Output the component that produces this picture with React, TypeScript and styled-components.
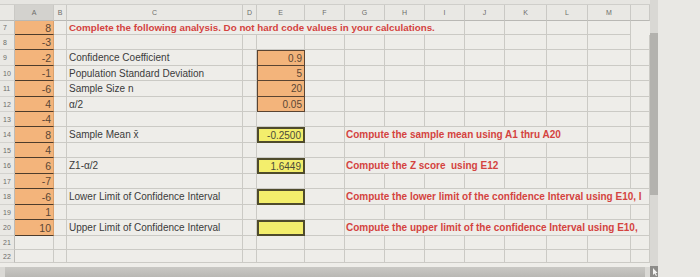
import React from 'react'
import styled, { createGlobalStyle } from 'styled-components'

const GlobalStyle = createGlobalStyle`
  html, body {
    margin: 0;
    padding: 0;
    background: #ebeae6;
    overflow: hidden;
  }
`

const COLS = '15px 39px 13px 176px 14px 48px 40px 40px 40px 40px 40px 42px 41px 43px 19px'
const LETTERS = ['A', 'B', 'C', 'D', 'E', 'F', 'G', 'H', 'I', 'J', 'K', 'L', 'M', '']

const Page = styled.div`
  display: flex;
  width: 700px;
  height: 277px;
  overflow: hidden;
`

const Sheet = styled.div`
  display: flex;
  flex-direction: column;
  width: 650px;
  height: 277px;
  background: #eeede9;
`

const TopStrip = styled.div`
  height: 4px;
  background: #e6e5e1;
  border-bottom: 1px solid #cfceca;
`

const Row = styled.div<{ $h: number }>`
  display: grid;
  grid-template-columns: ${COLS};
  height: ${(p) => p.$h}px;
  flex-shrink: 0;
`

const HeadCell = styled.div<{ $active?: boolean }>`
  display: flex;
  align-items: center;
  justify-content: center;
  background: ${(p) => (p.$active ? '#d3d2ce' : '#e9e8e4')};
  border-right: 1px solid #cac9c5;
  border-bottom: 1px solid #b9b8b4;
  font-family: 'Liberation Sans', Arial, sans-serif;
  font-size: 7px;
  color: #6d6d6a;
`

const RowNum = styled.div`
  display: flex;
  align-items: center;
  padding-left: 3px;
  background: #e9e8e4;
  border-right: 1px solid #bdbcb8;
  border-bottom: 1px solid #d3d2ce;
  font-family: 'Liberation Sans', Arial, sans-serif;
  font-size: 7px;
  color: #6d6d6a;
`

const Cell = styled.div<{ $span?: number }>`
  grid-column: span ${(p) => p.$span ?? 1};
  display: flex;
  align-items: center;
  box-sizing: border-box;
  min-width: 0;
  border-right: 1px solid #cbcac5;
  border-bottom: 1px solid #cbcac5;
  white-space: nowrap;
  overflow: visible;
`

const OrangeA = styled(Cell)`
  justify-content: flex-end;
  padding-right: 2px;
  background: #f3b47b;
  border-right: 1px solid #d9a06c;
  border-bottom: 1.5px solid #4d3c2c;
  font-family: 'Liberation Sans', Arial, sans-serif;
  font-size: 10.5px;
  color: #5a4634;
`

const OrangeE = styled(Cell)<{ $first?: boolean }>`
  justify-content: flex-end;
  padding-right: 2px;
  background: #f3b47b;
  border: 1.5px solid #5a4432;
  border-top: ${(p) => (p.$first ? '1.5px solid #5a4432' : 'none')};
  font-family: 'Liberation Sans', Arial, sans-serif;
  font-size: 10px;
  color: #5a4634;
`

const YellowE = styled(Cell)`
  justify-content: flex-end;
  padding-right: 2px;
  background: #f3ee6c;
  border: 2px solid #4f4b2c;
  font-family: 'Liberation Sans', Arial, sans-serif;
  font-size: 10px;
  color: #4a4a3a;
`

const Label = styled(Cell)`
  padding-left: 2px;
  font-family: 'Liberation Sans', Arial, sans-serif;
  font-size: 10px;
  color: #3b3b3b;
`

const Note = styled(Cell)<{ $indent?: number; $size?: number }>`
  padding-left: ${(p) => p.$indent ?? 1}px;
  font-family: 'Liberation Sans', Arial, sans-serif;
  font-weight: bold;
  font-size: ${(p) => p.$size ?? 10}px;
  color: #d4433f;
  white-space: pre;
  overflow: hidden;
`

const HScroll = styled.div`
  display: flex;
  height: 10px;
  margin-top: auto;
  padding-left: 5px;
  background: #dad9d5;
`

const HThumb = styled.div`
  flex: 1;
  margin-right: 5px;
  background: linear-gradient(#c9c8c4, #b9b8b4);
`

const VScroll = styled.div`
  display: flex;
  flex-direction: column;
  width: 8px;
  height: 277px;
  background: #d9d8d4;
`

const VThumb = styled.div`
  margin-top: 33px;
  height: 162px;
  background: #b3b2ae;
`

const Corner = styled.div`
  margin-top: auto;
  height: 11px;
  display: flex;
  align-items: flex-end;
`

const Side = styled.div`
  flex: 1;
  background: #e9e8e4;
`

const aValues = ['8', '-3', '-2', '-1', '-6', '4', '-4', '8', '4', '6', '-7', '-6', '1', '10']
const heights = [14, 15, 16, 15, 16, 15, 15, 16, 15, 16, 15, 16, 15, 16, 14, 13]

const labels: Record<number, string> = {
  9: 'Confidence Coefficient',
  10: 'Population Standard Deviation',
  11: 'Sample Size n',
  12: 'α/2',
  14: 'Sample Mean x̄',
  16: 'Z1-α/2',
  18: 'Lower Limit of Confidence Interval',
  20: 'Upper Limit of Confidence Interval',
}

const orange: Record<number, string> = { 9: '0.9', 10: '5', 11: '20', 12: '0.05' }
const yellow: Record<number, string> = { 14: '-0.2500', 16: '1.6449', 18: '', 20: '' }

const notes: Record<number, [string, number]> = {
  14: ['Compute the sample mean using A1 thru A20', 6],
  16: ['Compute the Z score  using E12', 4],
  18: ['Compute the lower limit of the confidence Interval using E10, I', 8],
  20: ['Compute the upper limit of the confidence Interval using E10,', 8],
}

const Blank = ({ n }: { n: number }) => (
  <>
    {Array.from({ length: n }, (_, i) => (
      <Cell key={i} />
    ))}
  </>
)

const SheetRow = ({ r, h }: { r: number; h: number }) => {
  const a = aValues[r - 7]
  const note = notes[r]
  let eCell: React.ReactNode = <Cell />
  if (orange[r] !== undefined) eCell = <OrangeE $first={r === 9}>{orange[r]}</OrangeE>
  if (yellow[r] !== undefined) eCell = <YellowE>{yellow[r]}</YellowE>

  if (r === 7) {
    return (
      <Row $h={h}>
        <RowNum>{r}</RowNum>
        <OrangeA>{a}</OrangeA>
        <Cell />
        <Note $span={7} $indent={2} $size={9.8}>
          Complete the following analysis. Do not hard code values in your calculations.
        </Note>
        <Blank n={4} />
      </Row>
    )
  }

  return (
    <Row $h={h}>
      <RowNum>{r}</RowNum>
      {a !== undefined ? <OrangeA>{a}</OrangeA> : <Cell />}
      <Cell />
      {labels[r] ? <Label>{labels[r]}</Label> : <Cell />}
      <Cell />
      {eCell}
      <Cell />
      {note ? (
        <>
          <Note $span={note[1]}>{note[0]}</Note>
          <Blank n={8 - note[1]} />
        </>
      ) : (
        <Blank n={8} />
      )}
    </Row>
  )
}

export default function App() {
  return (
    <Page>
      <GlobalStyle />
      <Sheet>
        <TopStrip />
        <Row $h={16}>
          <HeadCell />
          {LETTERS.map((l, i) => (
            <HeadCell key={i} $active={l === 'A'}>
              {l}
            </HeadCell>
          ))}
        </Row>
        {heights.map((h, i) => (
          <SheetRow key={i} r={i + 7} h={h} />
        ))}
        <HScroll>
          <HThumb />
        </HScroll>
      </Sheet>
      <VScroll>
        <VThumb />
        <Corner>
          <svg width="8" height="11" viewBox="0 0 8 11">
            <rect x="0" y="0" width="8" height="11" fill="#8d8c89" />
            <path d="M3 2 L3 9 L4.6 7.4 L6 10 L7 9.4 L5.6 7 L7.6 7 Z" fill="#f4f4f2" />
          </svg>
        </Corner>
      </VScroll>
      <Side />
    </Page>
  )
}
